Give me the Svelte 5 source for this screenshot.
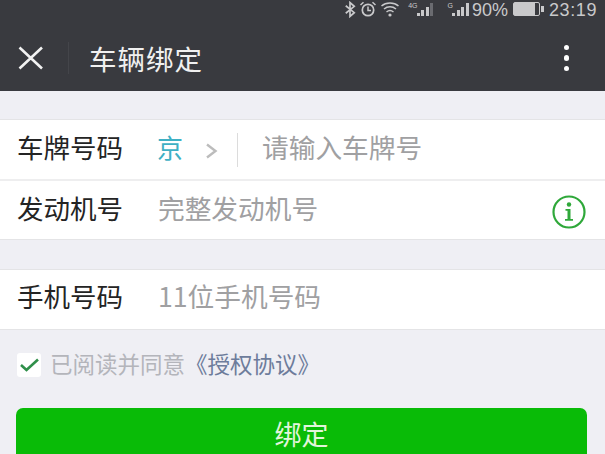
<script>
    let agreed = true;
</script>

<div class="page">
    <header class="topbar">
        <div class="status">
            <svg class="ic" width="12" height="17" viewBox="0 0 10 16"><path d="M1 4.500l8 6.500-4 3.500V1.500l4 3.500-8 6.500" fill="none" stroke="#c9c9cb" stroke-width="1.600"/></svg>
            <svg class="ic" width="18" height="16" viewBox="0 0 18 16"><circle cx="9" cy="9" r="5.700" fill="none" stroke="#c9c9cb" stroke-width="1.700"/><path d="M9 5.500V9.500H12M1.500 4L4.500 1.300M16.500 4L13.500 1.300" fill="none" stroke="#c9c9cb" stroke-width="1.500"/></svg>
            <svg class="ic" width="20" height="16" viewBox="0 0 20 16"><path d="M1.500 5C6 1 14 1 18.500 5M4 8c3.500-3 8.500-3 12 0M6.500 11c2-1.600 5-1.600 7 0" fill="none" stroke="#c9c9cb" stroke-width="1.500"/><circle cx="10" cy="14" r="1.600" fill="#c9c9cb"/></svg>
            <div class="signal"><span class="tag">4G</span><i style="height:3px"></i><i style="height:6px"></i><i style="height:9px"></i><i class="dim" style="height:13px"></i></div>
            <div class="signal second"><span class="tag">G</span><i style="height:3px"></i><i style="height:6px"></i><i style="height:9px"></i><i style="height:13px"></i></div>
            <span class="pct">90%</span>
            <div class="battery"><div class="level"></div></div>
            <span class="clock">23:19</span>
        </div>
        <div class="navrow">
            <svg class="close" width="26" height="24" viewBox="0 0 26 24"><path d="M1.500 1.500L24 22.500M24 1.500L1.500 22.500" stroke="#f2f2f2" stroke-width="2.600" fill="none"/></svg>
            <div class="sep"></div>
            <h1>车辆绑定</h1>
            <div class="dots"><span></span><span></span><span></span></div>
        </div>
    </header>

    <section class="group first">
        <div class="row">
            <span class="label">车牌号码</span>
            <span class="city">京</span>
            <svg class="chev" width="13" height="18" viewBox="0 0 13 18"><path d="M2 2.500L10.500 9L2 15.500" fill="none" stroke="#bcbcbc" stroke-width="2.400"/></svg>
            <div class="vline"></div>
            <span class="hint plate">请输入车牌号</span>
        </div>
        <div class="row">
            <span class="label">发动机号</span>
            <span class="hint">完整发动机号</span>
            <svg class="info" width="36" height="36" viewBox="0 0 36 36">
                <circle cx="18" cy="18" r="15.500" fill="none" stroke="#2fa83a" stroke-width="2.200"/>
                <circle cx="18" cy="10.500" r="2.200" fill="#2fa83a"/>
                <path d="M14.500 15h5v10h2.500v1.800H14v-1.800h2.500v-8.200h-2z" fill="#2fa83a"/>
            </svg>
        </div>
    </section>

    <section class="group second-group">
        <div class="row">
            <span class="label">手机号码</span>
            <span class="hint">11位手机号码</span>
        </div>
    </section>

    <div class="agree">
        <span class="check">
            {#if agreed}
                <svg width="21" height="16" viewBox="0 0 21 16"><path d="M2 8l5.500 5L19 2.500" fill="none" stroke="#2f8f4a" stroke-width="2.600"/></svg>
            {/if}
        </span>
        <span class="agree-text">已阅读并同意</span>
        <span class="link">《授权协议》</span>
    </div>

    <button class="bind">绑定</button>
</div>

<style>
    :global(body) {
        margin: 0;
        background: #efeff4;
    }
    .page {
        width: 605px;
        height: 454px;
        overflow: hidden;
        background: #efeff4;
        font-family: "Noto Sans CJK SC", "Noto Sans", sans-serif;
    }
    .topbar {
        height: 91px;
        background: #393a3f;
        box-sizing: border-box;
    }
    .status {
        height: 20px;
        display: flex;
        align-items: center;
        justify-content: flex-end;
        gap: 3px;
        padding-right: 8px;
        color: #c9c9cb;
    }
    .ic {
        flex: none;
        margin-bottom: 2px;
    }
    .signal {
        display: flex;
        align-items: flex-end;
        gap: 1.500px;
        height: 14px;
        margin-left: 5px;
        margin-bottom: 2px;
    }
    .signal.second {
        margin-left: 11px;
    }
    .signal i {
        width: 3px;
        background: #c9c9cb;
    }
    .signal i.dim {
        background: #6a6b70;
    }
    .tag {
        font-size: 7px;
        line-height: 8px;
        align-self: flex-start;
        margin-right: -2px;
        font-family: "Liberation Sans", sans-serif;
    }
    .pct, .clock {
        font-family: "Liberation Sans", sans-serif;
        font-size: 18px;
        line-height: 20px;
    }
    .clock {
        margin-left: 6px;
        letter-spacing: 0.600px;
    }
    .battery {
        width: 25px;
        height: 12px;
        border: 1.500px solid #c9c9cb;
        border-radius: 2px;
        position: relative;
        margin-left: 2px;
        margin-bottom: 2px;
    }
    .battery::after {
        content: "";
        position: absolute;
        right: -5px;
        top: 3px;
        width: 2.500px;
        height: 6px;
        background: #c9c9cb;
    }
    .level {
        width: 21px;
        height: 12px;
        background: #c9c9cb;
    }
    .navrow {
        height: 71px;
        display: flex;
        align-items: center;
        padding: 5px 0 0 18px;
        box-sizing: border-box;
    }
    .sep {
        width: 1px;
        height: 32px;
        background: #44454a;
        margin-left: 24px;
    }
    h1 {
        margin: 0 0 0 20px;
        font-size: 27.500px;
        font-weight: 400;
        letter-spacing: 1px;
        color: #f0f0f0;
    }
    .dots {
        margin-left: auto;
        margin-right: 36px;
        display: flex;
        flex-direction: column;
        gap: 5px;
    }
    .dots span {
        width: 5.500px;
        height: 5.500px;
        border-radius: 50%;
        background: #fff;
    }
    .group {
        background: #fff;
        border-top: 1px solid #e4e4e6;
        border-bottom: 1px solid #e4e4e6;
    }
    .group.first {
        margin-top: 28px;
    }
    .second-group {
        margin-top: 29px;
    }
    .row {
        height: 59px;
        display: flex;
        align-items: center;
        padding: 0 17px;
        box-sizing: border-box;
    }
    .row + .row {
        border-top: 2px solid #eeeeef;
        height: 60px;
    }
    .label {
        width: 141px;
        flex: none;
        font-size: 26.500px;
        color: #242424;
        padding-bottom: 6px;
    }
    .city {
        font-size: 26px;
        color: #3fb0c4;
        margin-left: -1px;
        padding-bottom: 6px;
    }
    .chev {
        margin-left: 22px;
        margin-top: 2px;
    }
    .vline {
        width: 1px;
        height: 34px;
        background: #dcdcdc;
        margin-left: 19px;
    }
    .hint {
        font-size: 26.700px;
        color: #a0a0a2;
        padding-bottom: 6px;
    }
    .second-group .label,
    .second-group .hint {
        padding-bottom: 8px;
    }
    .hint.plate {
        margin-left: 24px;
    }
    .info {
        margin-left: auto;
        margin-right: 1px;
        margin-top: 3px;
    }
    .agree {
        display: flex;
        align-items: center;
        margin-top: 18px;
        padding-left: 17px;
        height: 30px;
    }
    .check {
        width: 24px;
        height: 24px;
        margin-top: 4px;
        border-radius: 3px;
        background: #fff;
        display: flex;
        align-items: center;
        justify-content: center;
    }
    .agree-text {
        margin-left: 9px;
        font-size: 22.500px;
        color: #b4b5bb;
    }
    .link {
        font-size: 22.500px;
        color: #6d7c9b;
    }
    .bind {
        display: block;
        width: 571px;
        height: 60px;
        margin: 30px 0 0 16px;
        background: #09bb07;
        border: none;
        border-radius: 7px;
        color: #e2f5dc;
        font-family: inherit;
        font-size: 27px;
        padding: 0 0 10px;
    }
</style>
